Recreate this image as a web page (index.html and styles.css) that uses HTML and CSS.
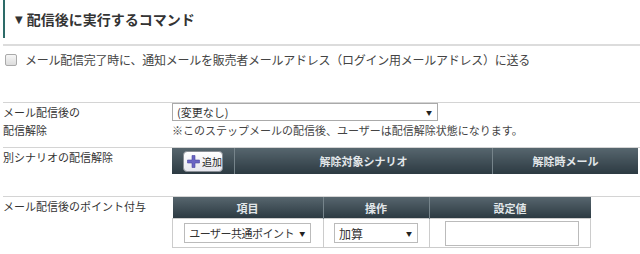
FILE: index.html
```html
<!DOCTYPE html>
<html lang="ja">
<head>
  <meta charset="UTF-8">
  <title>配信後に実行するコマンド</title>
  <link rel="stylesheet" href="styles.css">
</head>
<body>
  <h3 class="cmd-title"><span class="tri">▼</span> 配信後に実行するコマンド</h3>
  <div class="divider"></div>

  <label class="notify">
    <input type="checkbox" class="check">
    <span>メール配信完了時に、通知メールを販売者メールアドレス（ログイン用メールアドレス）に送る</span>
  </label>

  <div class="form-row row-unsub">
    <div class="label">メール配信後の<br>配信解除</div>
    <div class="field">
      <span class="sel sel-main">
        <select>
          <option>(変更なし)</option>
        </select>
      </span>
      <p class="note">※このステップメールの配信後、ユーザーは配信解除状態になります。</p>
    </div>
  </div>

  <div class="form-row row-scenario">
    <div class="label">別シナリオの配信解除</div>
    <div class="field">
      <table class="grid scenario">
        <thead>
          <tr>
            <th class="col-add">
              <button class="add-btn">
                <svg width="13" height="13" viewBox="0 0 13 13">
                  <path d="M5 0.5h3v4.5h4.5v3h-4.5v4.5h-3v-4.5h-4.5v-3h4.5z" fill="#6a64c4" stroke="#4c46a0" stroke-width="0.6"/>
                </svg>
                追加
              </button>
            </th>
            <th class="col-target">解除対象シナリオ</th>
            <th>解除時メール</th>
          </tr>
        </thead>
      </table>
    </div>
  </div>

  <div class="form-row row-point">
    <div class="label">メール配信後のポイント付与</div>
    <div class="field">
      <table class="grid points">
        <thead>
          <tr>
            <th class="col-item">項目</th>
            <th class="col-op">操作</th>
            <th>設定値</th>
          </tr>
        </thead>
        <tbody>
          <tr>
            <td>
              <span class="sel sel-item">
                <select><option>ユーザー共通ポイント</option></select>
              </span>
            </td>
            <td>
              <span class="sel sel-op">
                <select><option>加算</option></select>
              </span>
            </td>
            <td><input type="text" class="value"></td>
          </tr>
        </tbody>
      </table>
    </div>
  </div>
</body>
</html>
```

FILE: styles.css
```css
body {
  margin: 0;
  font-family: "Noto Sans CJK JP", "Liberation Sans", sans-serif;
  font-size: 11px;
  color: #333;
  background: #fff;
}

.cmd-title {
  margin: 0 0 0 3px;
  height: 38px;
  padding-left: 10px;
  border-left: 2px solid #2d6b68;
  display: flex;
  align-items: center;
  font-size: 14px;
  font-weight: bold;
  color: #333;
}

.tri {
  font-family: "DejaVu Sans", sans-serif;
  font-size: 10px;
  margin-right: 4px;
}

.divider {
  margin: 6px 0 0 3px;
  border-top: 2px solid #dcdcdc;
}

.notify {
  display: flex;
  align-items: center;
  gap: 8px;
  margin: 5px 0 0 5px;
  font-size: 12px;
  letter-spacing: -0.25px;
  color: #444;
}

.check {
  appearance: none;
  margin: 0;
  width: 12px;
  height: 12px;
  border: 1px solid #aaa;
  border-radius: 2px;
  background: linear-gradient(#f6f6f6, #dcdcdc);
}

.form-row {
  display: grid;
  grid-template-columns: 169px 1fr;
  margin-left: 3px;
  border-top: 1px solid #d4d4d4;
}

.row-unsub {
  margin-top: 34px;
  padding-bottom: 8px;
}

.row-scenario {
  padding-bottom: 22px;
}

.label {
  line-height: 18px;
  color: #333;
}

.note {
  margin: 0;
  line-height: 18px;
  color: #444;
}

.sel {
  position: relative;
  display: inline-block;
}

.sel::after {
  content: "▼";
  position: absolute;
  right: 6px;
  top: 50%;
  transform: translateY(-50%);
  font-size: 6px;
  color: #222;
  pointer-events: none;
}

.sel select {
  appearance: none;
  display: block;
  margin: 0;
  border: 1px solid #aaa;
  border-radius: 0;
  background: #fff;
  font-family: inherit;
  color: #333;
  padding: 0 4px;
}

.sel-main select {
  width: 266px;
  height: 18px;
  font-size: 11px;
}

.sel-item select {
  width: 127px;
  height: 20px;
  font-size: 11px;
  letter-spacing: -0.5px;
  padding: 0 2px 0 4px;
  border-color: #bbb;
}

.sel-op select {
  width: 84px;
  height: 20px;
  font-size: 12px;
  border-color: #bbb;
}

.grid {
  border-collapse: collapse;
  table-layout: fixed;
}

.grid th {
  height: 21px;
  padding: 0;
  background: linear-gradient(#57666e, #2c3a42);
  color: #e2e7ea;
  font-size: 11px;
  font-weight: bold;
  text-align: center;
  border-left: 1px solid #76848b;
}

.grid th:first-child {
  border-left: none;
}

.scenario {
  width: 466px;
}

.scenario th {
  height: 26px;
}

.col-add {
  width: 62px;
}

.grid th.col-add {
  text-align: left;
}

.col-target {
  width: 257px;
}

.add-btn {
  display: inline-flex;
  align-items: center;
  gap: 2px;
  margin-left: 11px;
  width: 40px;
  height: 21px;
  padding: 0 0 0 3px;
  border: 1px solid #8a8f96;
  border-radius: 4px;
  background: linear-gradient(#ffffff, #e6e6ee);
  font-family: inherit;
  font-size: 10px;
  color: #222;
  cursor: pointer;
}

.points {
  width: 419px;
}

.col-item {
  width: 150px;
}

.col-op {
  width: 105px;
}

.points td {
  height: 28px;
  padding: 0;
  text-align: center;
  border: 1px solid #ccc;
}

.value {
  width: 134px;
  height: 25px;
  box-sizing: border-box;
  margin: 0 0 0 4px;
  border: 1px solid #bbb;
  border-radius: 0;
}
```
